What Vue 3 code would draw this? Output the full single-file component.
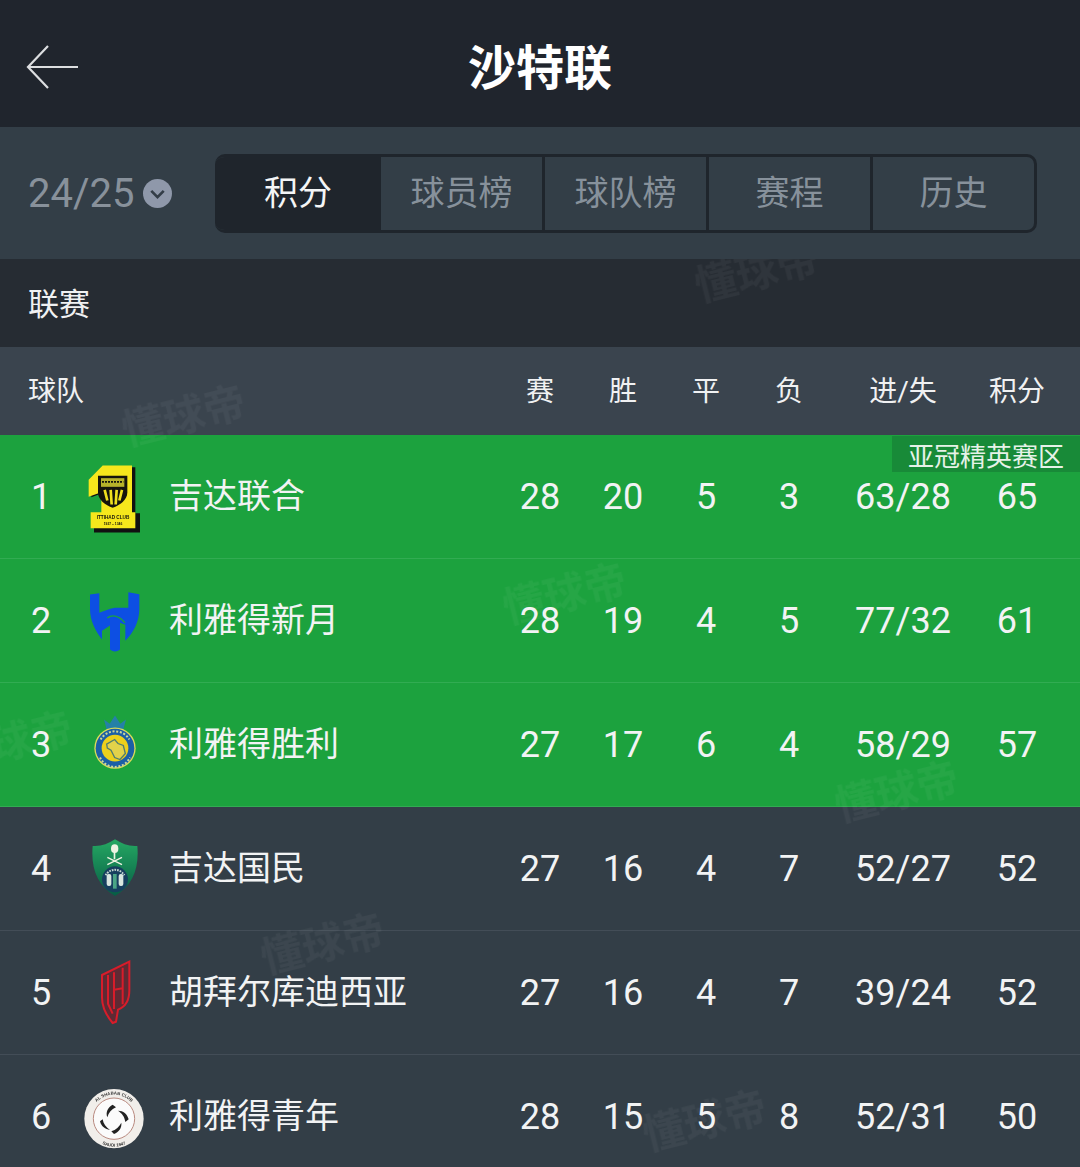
<script setup>
const tabs = ['积分', '球员榜', '球队榜', '赛程', '历史']
const heads = ['赛', '胜', '平', '负', '进/失', '积分']
const rows = [
  { rank: 1, name: '吉达联合', vals: [28, 20, 5, 3, '63/28', 65], top: true, badge: '亚冠精英赛区', logo: 'ittihad', box: '-3 4.5 270 270' },
  { rank: 2, name: '利雅得新月', vals: [28, 19, 4, 5, '77/32', 61], top: true, logo: 'hilal', box: '-3 1.5 270 270' },
  { rank: 3, name: '利雅得胜利', vals: [27, 17, 6, 4, '58/29', 57], top: true, logo: 'nassr', box: '-3 -16.5 270 270' },
  { rank: 4, name: '吉达国民', vals: [27, 16, 4, 7, '52/27', 52], logo: 'ahli', box: '-3 -6 270 270' },
  { rank: 5, name: '胡拜尔库迪西亚', vals: [27, 16, 4, 7, '39/24', 52], logo: 'qadsiah', box: '-3 -9 270 270' },
  { rank: 6, name: '利雅得青年', vals: [28, 15, 5, 8, '52/31', 50], logo: 'shabab', box: '-3 -12 270 270' }
]
const marks = [
  { x: 694, y: 248 }, { x: 121, y: 392 }, { x: 502, y: 570 }, { x: 834, y: 768 },
  { x: 260, y: 920 }, { x: 642, y: 1097 }, { x: -52, y: 718 }
]
const markStyle = (m) => ({ left: m.x + 'px', top: m.y - 259 + 'px' })
</script>

<template>
  <div class="page">
    <header class="topbar">
      <svg class="back" width="54" height="46" viewBox="0 0 54 46" fill="none" stroke="#dcdee0" stroke-width="2.2">
        <path d="M53 23H4M23 2 3 23l20 21" />
      </svg>
      <h1 class="title">沙特联</h1>
      <span></span>
    </header>

    <section class="controls">
      <div class="season">
        <span>24/25</span>
        <svg width="29" height="29" viewBox="0 0 28 28">
          <circle cx="14" cy="14" r="14" fill="#8f98aa" />
          <path d="M8 11.5l6 6 6-6" fill="none" stroke="#333d47" stroke-width="2.6" />
        </svg>
      </div>
      <nav class="tabs">
        <div v-for="(t, i) in tabs" :key="t" class="tab" :class="{ active: i === 0 }">{{ t }}</div>
      </nav>
    </section>

    <main class="board">
      <div class="section-title">联赛</div>
      <div class="grid head">
        <div class="team-head">球队</div>
        <div v-for="h in heads" :key="h" class="cell">{{ h }}</div>
      </div>

      <div v-for="r in rows" :key="r.rank" class="grid row" :class="{ top: r.top }">
        <div class="rank">{{ r.rank }}</div>
        <div class="logo">
          <svg width="90" height="90" :viewBox="r.box">
            <template v-if="r.logo === 'ittihad'">
              <path d="M106 50h90v138h14v58H72v-58h30v-62l-38 14V93z" fill="#111" />
              <path d="M98 45h88v140h10v48H62v-48h32v-60l-38 14V88z" fill="#f6e71c" />
              <path d="M84 76h88v50c0 22-22 38-44 46-22-8-44-24-44-46z" fill="#15140c" />
              <path d="M93 83h70v26H93z" fill="#b7b32a" />
              <path d="M96 94h64" stroke="#15140c" stroke-width="5" stroke-dasharray="6 3" />
              <path d="M104 118l8 32M122 118l3 44M140 118l-3 44M156 118l-8 32" stroke="#f0e01e" stroke-width="8" />
              <rect x="70" y="190" width="118" height="18" fill="#f6e71c" />
              <text x="129" y="204" text-anchor="middle" class="tiny">ITTIHAD CLUB</text>
              <text x="129" y="222" text-anchor="middle" class="tinier">1927 – 1346</text>
            </template>
            <template v-else-if="r.logo === 'hilal'">
              <path d="M60 57L88 53V112C100 108 115 100 135 97H175V50L208 56V100C208 140 190 172 166 196V148L150 142V222Q135 234 120 222V150L96 166V192C75 165 60 135 60 100Z" fill="#0d4fe3" />
              <path d="M112 127C128 116 148 122 165 142" fill="none" stroke="#1ca23e" stroke-width="4" />
            </template>
            <template v-else-if="r.logo === 'nassr'">
              <path d="M110 72l-8-30 17 13 16-25 16 25 17-13-8 30z" fill="#2580a8" />
              <circle cx="135" cy="128" r="62" fill="#dcdb5a" />
              <circle cx="135" cy="128" r="58" fill="#1c5fa6" />
              <circle cx="135" cy="128" r="40" fill="#ecd01c" />
              <path d="M110 116l24-14 10 12 16 6 6 24-16 18-16-6-11-22-11-6z" fill="#e2d24a" stroke="#4f7d70" stroke-width="4" />
              <path d="M92 102a50 50 0 0 1 86 0M90 156a50 50 0 0 0 90 0" fill="none" stroke="#cdd99a" stroke-width="6" stroke-dasharray="6 5" />
            </template>
            <template v-else-if="r.logo === 'ahli'">
              <defs>
                <linearGradient id="ahli-g" x1="0" y1="0" x2="0" y2="1">
                  <stop offset="0" stop-color="#25a862" />
                  <stop offset="1" stop-color="#075c45" />
                </linearGradient>
              </defs>
              <path d="M68 60c24 2 46-6 67-20 21 14 43 22 67 20 6 68-14 118-67 150C82 178 62 128 68 60z" fill="url(#ahli-g)" />
              <ellipse cx="134" cy="68" rx="11" ry="13" fill="#eef3e2" />
              <rect x="131" y="76" width="5" height="24" fill="#eef3e2" />
              <path d="M112 94l44 22M156 94l-44 22" stroke="#eef3e2" stroke-width="4" />
              <circle cx="135" cy="160" r="39" fill="#173f5e" />
              <path d="M107 148a32 32 0 0 1 56 0" fill="none" stroke="#c6d6d0" stroke-width="6" stroke-dasharray="5 3" />
              <rect x="110" y="144" width="14" height="36" rx="6" fill="#d9e7e0" />
              <rect x="146" y="144" width="14" height="36" rx="6" fill="#d9e7e0" />
              <rect x="129" y="144" width="11" height="44" fill="#4aa585" />
            </template>
            <template v-else-if="r.logo === 'qadsiah'">
              <path d="M96 72l82-40v86c0 30-12 50-34 58l-6 36-10 4c-20-24-32-48-32-76z" fill="#5f2a34" />
              <path d="M96 72l82-40v86c0 30-12 50-34 58l-6 36-10 4c-20-24-32-48-32-76z" fill="none" stroke="#d81c2a" stroke-width="6" />
              <path d="M114 72v86l14 30M132 64v110M158 50v110M132 116l26-4" fill="none" stroke="#d81c2a" stroke-width="6" />
            </template>
            <template v-else-if="r.logo === 'shabab'">
              <defs>
                <path id="shabab-top" d="M60 128a72 72 0 0 1 144 0" />
                <path id="shabab-bot" d="M48 128a84 84 0 0 0 168 0" />
              </defs>
              <circle cx="132" cy="128" r="89" fill="#f1eeea" />
              <circle cx="132" cy="128" r="62" fill="#fbfbfb" stroke="#b98a80" stroke-width="3" />
              <path d="M128 86c-14 8-22 22-16 38 4-14 12-24 26-30zM176 130c-4-16-16-26-32-26 12 8 20 18 22 34zM132 174c14-6 24-18 22-34-6 12-16 22-30 26zM90 136c4 16 16 24 30 26-12-8-20-18-22-32z" fill="#222" />
              <text class="ringtext" text-anchor="middle"><textPath href="#shabab-top" startOffset="50%">AL SHABAB CLUB</textPath></text>
              <text class="ringtext" text-anchor="middle"><textPath href="#shabab-bot" startOffset="50%">SAUDI 1947</textPath></text>
            </template>
          </svg>
        </div>
        <div class="name">{{ r.name }}</div>
        <div v-for="(v, i) in r.vals" :key="i" class="cell">{{ v }}</div>
        <div v-if="r.badge" class="badge">{{ r.badge }}</div>
      </div>

      <div v-for="(m, i) in marks" :key="i" class="mark" :style="markStyle(m)">懂球帝</div>
    </main>
  </div>
</template>

<style scoped>
.page {
  width: 1080px;
  height: 1167px;
  overflow: hidden;
  background: #333e47;
  font-family: Roboto, "Noto Sans CJK SC", sans-serif;
  color: #fff;
}
.topbar {
  height: 127px;
  background: #20252d;
  display: grid;
  grid-template-columns: 1fr auto 1fr;
  align-items: center;
  padding: 7px 25px 0;
  box-sizing: border-box;
}
.title {
  margin: 0;
  padding-top: 3px;
  font-size: 48px;
  font-weight: 700;
  line-height: 1;
  color: #fff;
}
.controls {
  height: 132px;
  background: #333e47;
  display: flex;
  align-items: center;
  justify-content: space-between;
  padding: 0 43px 0 28px;
  box-sizing: border-box;
}
.season {
  display: flex;
  align-items: center;
  gap: 9px;
  font-size: 40px;
  font-weight: 400;
  color: #88919b;
}
.tabs {
  width: 822px;
  height: 79px;
  box-sizing: border-box;
  border: 3px solid #1f252c;
  border-left: 0;
  border-radius: 10px;
  display: grid;
  grid-template-columns: 166px 164px 164px 164px 1fr;
  overflow: hidden;
}
.tab {
  display: flex;
  align-items: center;
  justify-content: center;
  padding-bottom: 5px;
  font-size: 34px;
  color: #87919b;
  border-right: 3px solid #1f252c;
  box-sizing: border-box;
}
.tab:last-child {
  border-right: 0;
}
.tab.active {
  background: #1f252c;
  color: #f4f5f6;
  border-right: 0;
}
.board {
  position: relative;
  overflow: hidden;
}
.section-title {
  height: 88px;
  box-sizing: border-box;
  background: #262c33;
  display: flex;
  align-items: center;
  padding: 0 0 4px 28px;
  font-size: 31px;
  color: #f0f1f2;
}
.grid {
  display: grid;
  grid-template-columns: 82px 64px 1fr repeat(4, 83px) 145px 83px;
  align-items: center;
  padding-right: 21.5px;
}
.head {
  height: 88px;
  box-sizing: border-box;
  padding-bottom: 4px;
  background: #3a444e;
  font-size: 28px;
  color: #f0f1f2;
}
.team-head {
  grid-column: 1 / 4;
  padding-left: 28px;
}
.cell {
  text-align: center;
}
.row {
  position: relative;
  height: 124px;
  box-sizing: border-box;
  border-bottom: 1px solid #434d57;
  background: #333e47;
  font-size: 36px;
  color: #f2f3f4;
}
.row.top {
  background: #1ca23e;
  border-bottom-color: #31ac52;
}
.rank {
  text-align: center;
}
.logo {
  display: flex;
  justify-content: center;
  height: 90px;
}
.logo svg {
  flex: none;
  margin: 0 -13px;
  filter: blur(0.5px);
}
.tiny {
  font: 700 14px "Liberation Sans", sans-serif;
  fill: #15140c;
}
.tinier {
  font: 700 10px "Liberation Sans", sans-serif;
  fill: #15140c;
}
.ringtext {
  font: 700 13px "Liberation Sans", sans-serif;
  fill: #333;
}
.name {
  padding: 0 0 6px 23px;
  font-size: 34px;
  white-space: nowrap;
}
.badge {
  position: absolute;
  top: 1px;
  right: 0;
  width: 188px;
  height: 36px;
  display: flex;
  align-items: center;
  justify-content: center;
  box-sizing: border-box;
  background: #188a38;
  font-size: 26px;
  color: #e6f2e8;
}
.mark {
  position: absolute;
  font-size: 42px;
  font-weight: 700;
  line-height: 1.2;
  color: rgba(255, 255, 255, 0.045);
  transform: rotate(-14deg);
  filter: blur(0.6px);
  pointer-events: none;
  white-space: nowrap;
}
</style>

<style>
html,
body {
  margin: 0;
  overflow: hidden;
}
</style>
